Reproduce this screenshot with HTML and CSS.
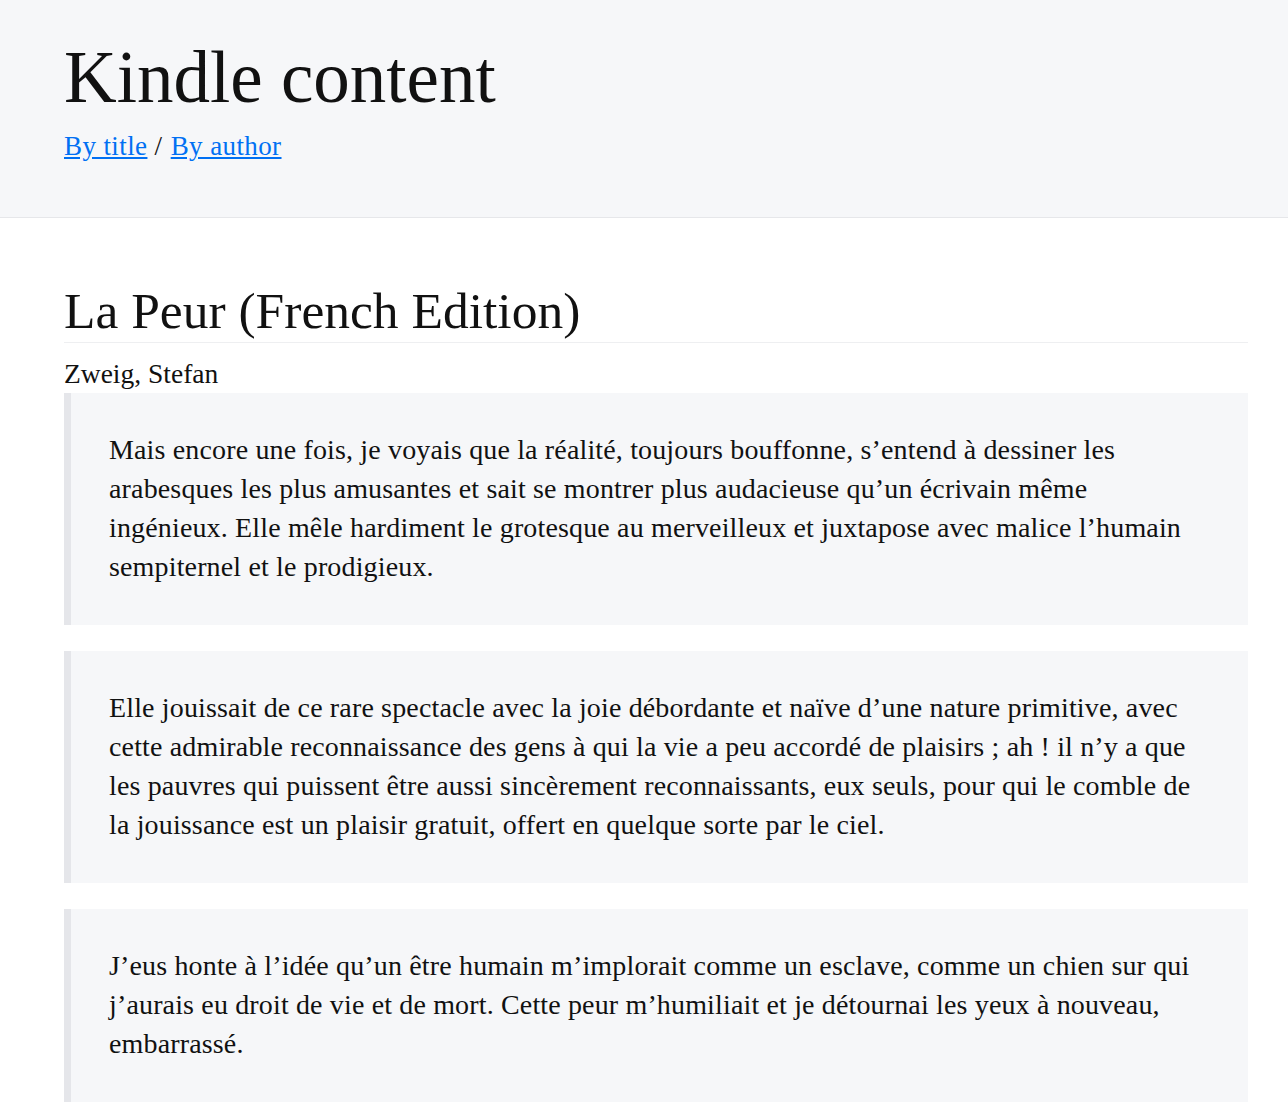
FILE: index.html
```html
<!DOCTYPE html>
<html lang="fr">
<head>
<meta charset="utf-8">
<title>Kindle content</title>
<link rel="stylesheet" href="styles.css">
</head>
<body>
<header class="site-header">
  <h1 class="site-title">Kindle content</h1>
  <nav class="site-nav"><a href="#">By title</a> <span class="sep">/</span> <a href="#">By author</a></nav>
</header>
<main class="content">
  <article class="book">
    <h2 class="book-title">La Peur (French Edition)</h2>
    <p class="book-author">Zweig, Stefan</p>
    <blockquote class="highlight"><p>Mais encore une fois, je voyais que la réalité, toujours bouffonne, s’entend à dessiner les<br>arabesques les plus amusantes et sait se montrer plus audacieuse qu’un écrivain même<br>ingénieux. Elle mêle hardiment le grotesque au merveilleux et juxtapose avec malice l’humain<br>sempiternel et le prodigieux.</p></blockquote>
    <blockquote class="highlight"><p>Elle jouissait de ce rare spectacle avec la joie débordante et naïve d’une nature primitive, avec<br>cette admirable reconnaissance des gens à qui la vie a peu accordé de plaisirs ; ah ! il n’y a que<br>les pauvres qui puissent être aussi sincèrement reconnaissants, eux seuls, pour qui le comble de<br>la jouissance est un plaisir gratuit, offert en quelque sorte par le ciel.</p></blockquote>
    <blockquote class="highlight"><p>J’eus honte à l’idée qu’un être humain m’implorait comme un esclave, comme un chien sur qui<br>j’aurais eu droit de vie et de mort. Cette peur m’humiliait et je détournai les yeux à nouveau,<br>embarrassé.</p></blockquote>
  </article>
</main>
</body>
</html>
```
FILE: styles.css
```css
html, body {
  margin: 0;
  padding: 0;
}
body {
  font-family: "Liberation Serif", "Times New Roman", serif;
  color: #111;
  background: #fff;
  font-size: 27px;
}
.site-header {
  background: #f6f7f9;
  border-bottom: 1px solid #e6e7ea;
  padding: 35px 40px 51px 64px;
}
.site-title {
  margin: 0 0 6px;
  font-size: 73px;
  font-weight: 400;
  line-height: 86px;
}
.site-nav {
  line-height: 39px;
  letter-spacing: 0.4px;
}
.site-nav .sep {
  margin: 0 1px 0 0;
}
.site-nav a {
  color: #0070f3;
  text-decoration: underline;
  text-underline-offset: 2px;
}
.content {
  padding: 62px 40px 40px 64px;
}
.book-title {
  margin: 0;
  font-size: 51.5px;
  font-weight: 400;
  line-height: 62px;
  border-bottom: 1px solid #eeeff1;
}
.book-author {
  margin: 11px 0 0;
  font-size: 27.5px;
  line-height: 39px;
}
.highlight {
  margin: 0 0 26px;
  background: #f6f7f9;
  border-left: 7px solid #e5e6ea;
  padding: 37px 20px 39px 38px;
}
.highlight p {
  margin: 0;
  font-size: 28px;
  letter-spacing: 0.15px;
  line-height: 39px;
}
```
